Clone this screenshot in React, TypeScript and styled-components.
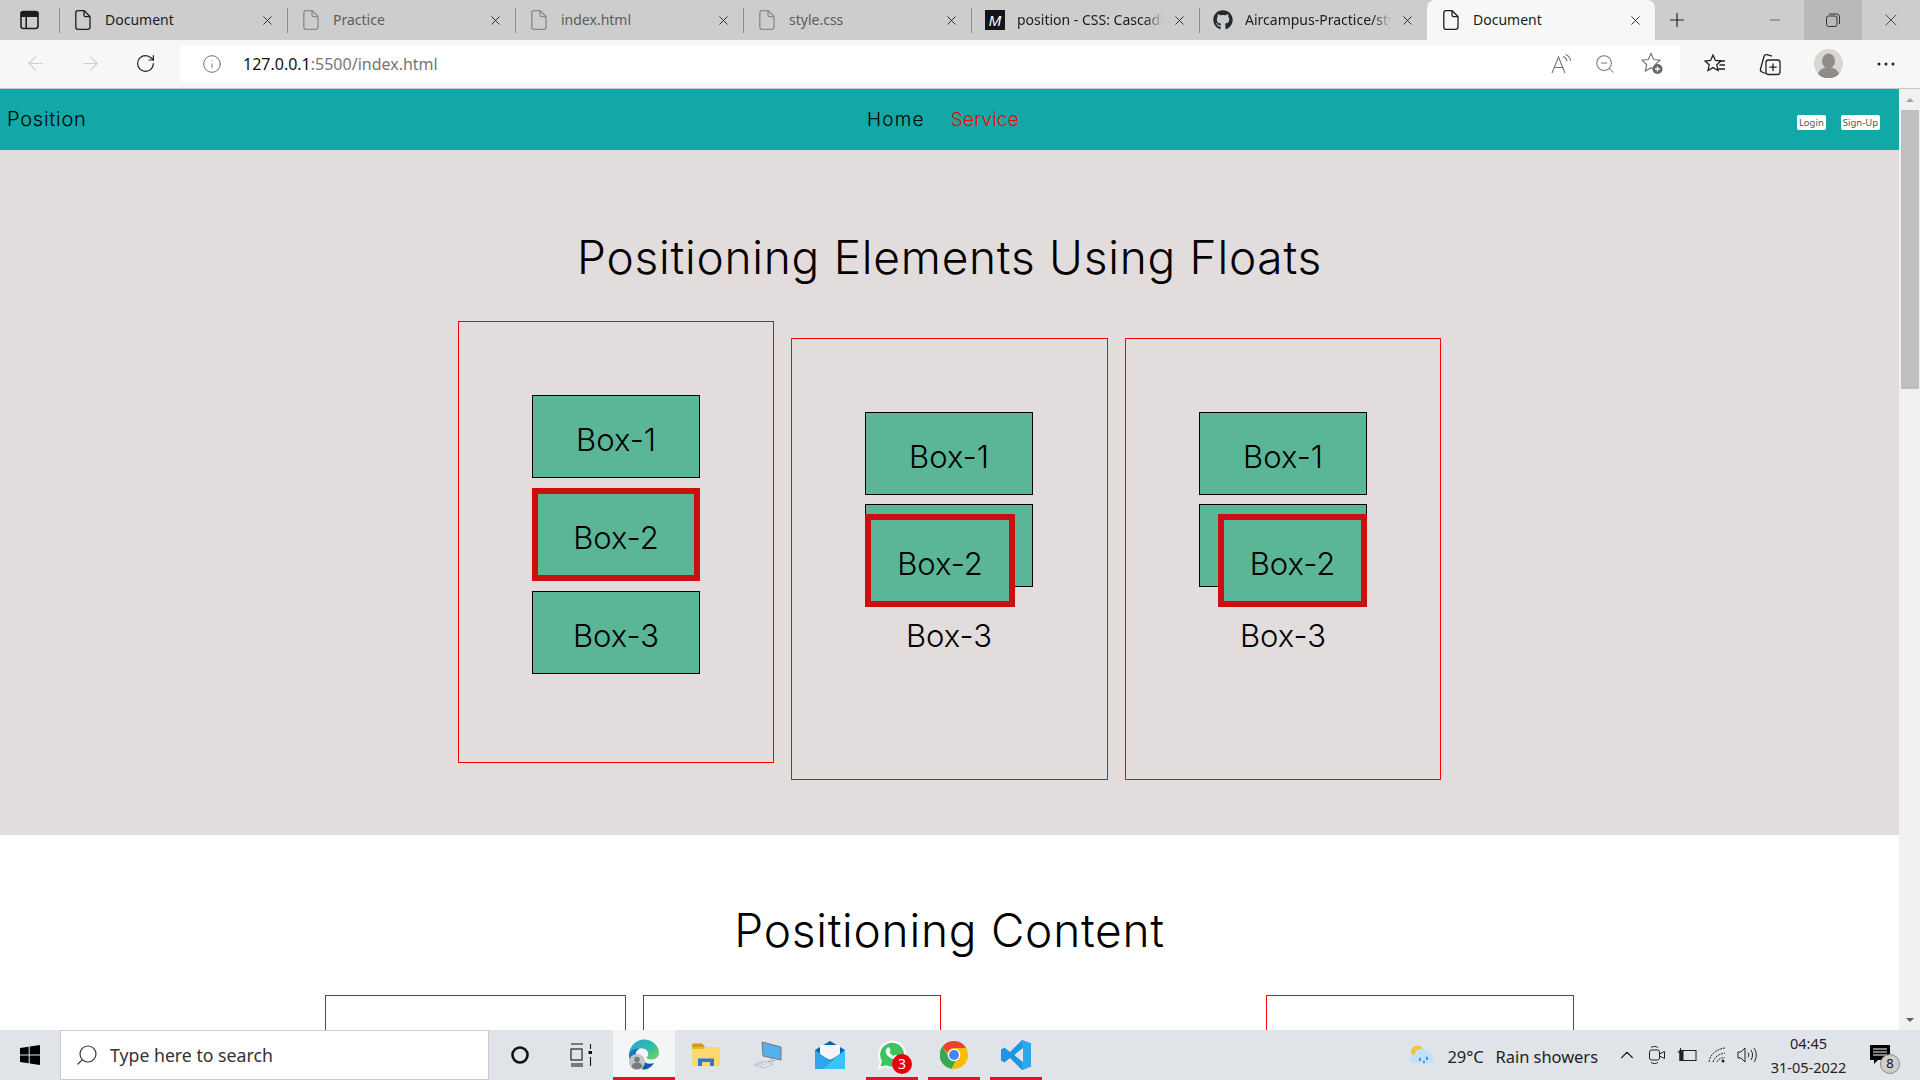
import React from 'react';
import styled, { createGlobalStyle } from 'styled-components';
import { ArrowLeft, ArrowRight, RotateCw, Info, X, Plus, Minus, ZoomOut, ChevronUp, Search } from 'lucide-react';
import { FaGithub } from 'react-icons/fa';

const GlobalStyle = createGlobalStyle`
  html, body { margin: 0; padding: 0; width: 1920px; height: 1080px; overflow: hidden; }
  * { box-sizing: border-box; }
  body { font-family: "Noto Sans", "Open Sans", sans-serif; color: #000; }
`;

const PAGE_FONT = `"Inter", "Open Sans", sans-serif`;

const Shell = styled.div`
  width: 1920px;
  height: 1080px;
  display: flex;
  flex-direction: column;
  overflow: hidden;
`;

/* ---------- browser chrome ---------- */

const TabStrip = styled.div`
  height: 40px;
  flex: none;
  display: flex;
  background: #cdcdcd;
`;

const SidebarButton = styled.div`
  width: 59px;
  display: flex;
  align-items: center;
  justify-content: center;
`;

const Tab = styled.div<{ $active?: boolean; $noSep?: boolean }>`
  width: 228px;
  height: 40px;
  display: flex;
  align-items: center;
  padding: 0 12px 0 16px;
  position: relative;
  background: ${(p) => (p.$active ? '#f7f7f7' : 'transparent')};
  border-radius: ${(p) => (p.$active ? '8px 8px 0 0' : '0')};
  &::before {
    content: '';
    display: ${(p) => (p.$noSep ? 'none' : 'block')};
    position: absolute;
    left: 0;
    top: 8px;
    height: 25px;
    width: 1px;
    background: #8e8e8e;
  }
`;

const TabFavicon = styled.span`
  width: 20px;
  height: 20px;
  flex: none;
  display: flex;
  align-items: center;
  justify-content: center;
  margin-right: 12px;
  margin-left: -2px;
`;

const TabTitle = styled.span<{ $dim?: boolean; $fade?: boolean }>`
  flex: 1;
  min-width: 0;
  white-space: nowrap;
  overflow: hidden;
  font-size: 14px;
  padding-bottom: 2px;
  color: ${(p) => (p.$dim ? '#5c5c5c' : '#1c1c1c')};
  ${(p) =>
    p.$fade &&
    `-webkit-mask-image: linear-gradient(to right, #000 86%, transparent 98%);
     mask-image: linear-gradient(to right, #000 86%, transparent 98%);`}
`;

const TabClose = styled.span`
  flex: none;
  width: 16px;
  display: flex;
  justify-content: center;
  margin-left: 5px;
  color: #1a1a1a;
`;

const MdnMark = styled.span`
  width: 20px;
  height: 20px;
  background: #15141a;
  color: #fff;
  font: italic 400 15px "Liberation Sans", sans-serif;
  display: flex;
  align-items: center;
  justify-content: center;
`;

const NewTab = styled.div`
  width: 44px;
  display: flex;
  align-items: center;
  justify-content: center;
  color: #222;
`;

const WindowControls = styled.div`
  margin-left: auto;
  display: flex;
`;

const WindowButton = styled.div<{ $hover?: boolean }>`
  width: 58px;
  height: 40px;
  display: flex;
  align-items: center;
  justify-content: center;
  color: #333;
  background: ${(p) => (p.$hover ? '#b9b9b9' : 'transparent')};
`;

const Toolbar = styled.div`
  height: 49px;
  flex: none;
  display: flex;
  align-items: center;
  background: #f7f7f7;
  border-bottom: 1px solid #c9c9c9;
  padding-bottom: 1px;
`;

const NavIcons = styled.div`
  width: 180px;
  display: flex;
  align-items: center;
  padding-left: 8px;
`;

const NavIcon = styled.span<{ $off?: boolean }>`
  width: 55px;
  display: flex;
  justify-content: center;
  color: ${(p) => (p.$off ? '#d0d0d0' : '#222')};
`;

const AddressBar = styled.div`
  width: 1500px;
  height: 38px;
  background: #fff;
  border-radius: 5px;
  display: flex;
  align-items: center;
  padding: 0 16px 0 22px;
`;

const Url = styled.span`
  margin-left: 21px;
  font-size: 16px;
  color: #767676;
  b {
    font-weight: 400;
    color: #111;
  }
`;

const AddressActions = styled.div`
  margin-left: auto;
  display: flex;
  align-items: center;
  gap: 21px;
  color: #777;
  svg:last-child { margin-left: 4px; }
`;

const ToolbarActions = styled.div`
  display: flex;
  align-items: center;
  margin-left: 6px;
`;

const ToolbarSlot = styled.span`
  width: 57px;
  display: flex;
  justify-content: center;
  color: #222;
`;

/* ---------- page ---------- */

const Viewport = styled.div`
  flex: 1;
  min-height: 0;
  display: flex;
`;

const Page = styled.div`
  flex: 1;
  min-width: 0;
  overflow: hidden;
  background: #fff;
  font-family: ${PAGE_FONT};
`;

const Header = styled.header`
  height: 61px;
  background: #12a8a8;
  display: grid;
  grid-template-columns: 1fr auto 1fr;
  align-items: center;
  padding: 0 19px 0 7px;
`;

const Brand = styled.div`
  font-size: 20px;
  font-weight: 300;
  letter-spacing: 0.75px;
  margin-bottom: 2px;
`;

const Links = styled.nav`
  display: flex;
  gap: 26px;
  margin-right: 1px;
`;

const NavLink = styled.a<{ $current?: boolean }>`
  font-size: 19px;
  font-weight: 300;
  letter-spacing: ${(p) => (p.$current ? '0.2px' : '1.2px')};
  color: ${(p) => (p.$current ? '#ff0000' : '#000')};
`;

const Auth = styled.div`
  display: flex;
  justify-content: flex-end;
  gap: 15px;
  padding-top: 6px;
`;

const AuthButton = styled.button`
  height: 15px;
  padding: 0 2px;
  background: #fff;
  color: #555;
  border: 0;
  border-radius: 2px;
  font: 400 9.5px "Noto Sans", sans-serif;
`;

const FloatSection = styled.section`
  height: 685px;
  background: #e2dcdc;
  padding-top: 79px;
`;

const Heading = styled.h1`
  margin: 0;
  text-align: center;
  font-size: 46px;
  line-height: 56px;
  font-weight: 300;
  letter-spacing: 0.75px;
  color: #000;
`;

const CardRow = styled.div`
  display: flex;
  justify-content: center;
  align-items: flex-start;
  gap: 17px;
  margin-top: 36px;
`;

const Card = styled.div<{ $drop?: boolean; $wide?: boolean }>`
  width: ${(p) => (p.$wide ? '317px' : '316px')};
  height: 442px;
  margin-top: ${(p) => (p.$drop ? '17px' : '0')};
  border: 1px solid #ff0000;
  padding: 73px 73px 0;
`;

const Box = styled.div<{ $loose?: boolean }>`
  width: 168px;
  height: 83px;
  margin-bottom: ${(p) => (p.$loose ? '10px' : '9px')};
  padding-top: 29px;
  background: #5bb698;
  border: 1px solid #000;
  text-align: center;
  font-size: 31px;
  line-height: 30px;
  font-weight: 300;
`;

const HighlightBox = styled(Box)<{ $float?: 'left' | 'right' }>`
  height: 93px;
  width: ${(p) => (p.$float === 'left' ? '150px' : p.$float === 'right' ? '149px' : '168px')};
  border: 6px solid #cc0e0e;
  margin-bottom: 10px;
  ${(p) =>
    p.$float &&
    `float: ${p.$float};
     margin-top: -20px;
     margin-bottom: 14px;
     margin-${p.$float}: -1px;`}
`;

const ContentSection = styled.section`
  height: 195px;
  padding-top: 67px;
`;

const SmallCardRow = styled.div`
  display: flex;
  margin: 37px 0 0 325px;
`;

const SmallCard = styled.div<{ $w: number; $mr: number }>`
  width: ${(p) => p.$w}px;
  margin-right: ${(p) => p.$mr}px;
  height: 300px;
  border: 1px solid #ff0000;
`;

const Scrollbar = styled.div`
  width: 21px;
  flex: none;
  background: #f1f1f1;
  display: flex;
  flex-direction: column;
  align-items: center;
`;

const ScrollArrow = styled.div<{ $down?: boolean }>`
  height: 21px;
  width: 100%;
  flex: none;
  display: flex;
  align-items: center;
  justify-content: center;
  margin-top: ${(p) => (p.$down ? 'auto' : '0')};
  &::after {
    content: '';
    border-left: 4px solid transparent;
    border-right: 4px solid transparent;
    ${(p) => (p.$down ? 'border-top: 4px solid #5f5f5f;' : 'border-bottom: 4px solid #a3a3a3;')}
  }
`;

const ScrollThumb = styled.div`
  width: 18px;
  height: 279px;
  background: #bfbfbf;
`;

/* ---------- taskbar ---------- */

const Taskbar = styled.div`
  height: 50px;
  flex: none;
  display: flex;
  align-items: stretch;
  background: #e0e4e8;
`;

const StartSlot = styled.div`
  width: 60px;
  display: flex;
  align-items: center;
  justify-content: center;
`;

const SearchBox = styled.div`
  width: 429px;
  background: #fff;
  border: 1px solid #ccc;
  display: flex;
  align-items: center;
  padding-left: 14px;
  color: #333;
  font-size: 17.7px;
  span { margin-left: 11px; }
  svg { transform: scaleX(-1); }
`;

const ShellSlot = styled.div`
  width: 61px;
  display: flex;
  align-items: center;
  justify-content: center;
`;

const Apps = styled.div`
  display: flex;
  margin-left: 2px;
`;

const AppSlot = styled.div<{ $active?: boolean; $running?: boolean }>`
  width: 62px;
  display: flex;
  align-items: center;
  justify-content: center;
  position: relative;
  background: ${(p) => (p.$active ? '#f3f5f7' : 'transparent')};
  &::after {
    content: '';
    display: ${(p) => (p.$running ? 'block' : 'none')};
    position: absolute;
    bottom: 0;
    left: ${(p) => (p.$active ? '0' : '5px')};
    right: ${(p) => (p.$active ? '0' : '5px')};
    height: 3px;
    background: #e3122a;
  }
`;

const UnreadBadge = styled.span`
  position: absolute;
  left: 31px;
  top: 24px;
  width: 20px;
  height: 20px;
  border-radius: 50%;
  background: #e8000d;
  color: #fff;
  font-size: 14px;
  line-height: 20px;
  text-align: center;
`;

const Tray = styled.div`
  margin-left: auto;
  display: flex;
  align-items: center;
  color: #222;
  padding-right: 15px;
`;

const Weather = styled.div`
  display: flex;
  align-items: center;
  font-size: 16.5px;
  letter-spacing: -0.05px;
  margin-right: 14px;
  padding-top: 2px;
  svg { margin-right: 12px; margin-top: -2px; }
  span + span { margin-left: 12px; }
`;

const TraySlot = styled.span`
  width: 30px;
  display: flex;
  justify-content: center;
  color: #222;
`;

const Clock = styled.div`
  width: 93px;
  text-align: center;
  font-size: 14.5px;
  line-height: 24px;
  color: #222;
`;

const NotifySlot = styled.div`
  width: 50px;
  height: 50px;
  position: relative;
  display: flex;
  align-items: center;
  justify-content: center;
`;

const NotifyCount = styled.span`
  position: absolute;
  left: 25px;
  top: 24px;
  width: 20px;
  height: 20px;
  border-radius: 50%;
  border: 1px solid #8a8a8a;
  background: #cfcfcf;
  color: #111;
  font-size: 13px;
  line-height: 17px;
  text-align: center;
`;

/* ---------- icons ---------- */

const DocIcon = ({ color = '#1e1e1e' }: { color?: string }) => (
  <svg width="16" height="20" viewBox="0 0 16 20" fill="none" stroke={color} strokeWidth="1.3">
    <path d="M3 .7h6.2L15 6.5V17a2.3 2.3 0 0 1-2.3 2.3H3A2.3 2.3 0 0 1 .8 17V3A2.3 2.3 0 0 1 3 .7Z" />
    <path d="M9 .8V5a1.6 1.6 0 0 0 1.6 1.6H15" />
  </svg>
);

const SidebarIcon = () => (
  <svg width="19" height="20" viewBox="0 0 19 20" fill="none" stroke="#1e1e1e" strokeWidth="1.6">
    <rect x="1" y="1.5" width="17" height="17" rx="2.5" />
    <path d="M1.5 2.5h16v3.6h-16z" fill="#1e1e1e" />
    <path d="M6.2 6v12" />
  </svg>
);

const RestoreIcon = () => (
  <svg width="14" height="14" viewBox="0 0 14 14" fill="none" stroke="#333" strokeWidth="1">
    <rect x=".5" y="3" width="10.5" height="10.5" rx="2" />
    <path d="M3 1h7.5A3 3 0 0 1 13.5 4v7" />
  </svg>
);

const ReadAloudIcon = () => (
  <svg width="22" height="20" viewBox="0 0 22 20" fill="none" stroke="#777" strokeWidth="1.1">
    <path d="M1 19 7.5 3 14 19M3.4 13.5h8.2" />
    <path d="M12 2.5c2 .7 3.5 2.5 4 4.6M14.5.5c2.6 1 4.7 3.4 5.2 6.5" />
  </svg>
);

const FavAddIcon = () => (
  <svg width="23" height="23" viewBox="0 0 23 23" fill="none" stroke="#777" strokeWidth="1.2">
    <path d="M10 1.5 12.7 7.5l6.3.7-4.7 4.3 1.3 6.3L10 15.8 4.4 19l1.3-6.3L1 8.2l6.3-.7Z" />
    <circle cx="16.5" cy="17" r="5" fill="#666" stroke="none" />
    <path d="M16.5 14.5v5M14 17h5" stroke="#fff" strokeWidth="1.3" />
  </svg>
);

const FavoritesIcon = () => (
  <svg width="22" height="22" viewBox="0 0 22 22" fill="none" stroke="#222" strokeWidth="1.3">
    <path d="M9 2 11.4 7.4l5.6.6-4.2 3.8 1.2 5.7L9 14.6 4 17.5l1.2-5.7L1 8l5.6-.6Z" />
    <path d="M15 8h6M15.5 12h5.5M14 16h7" />
  </svg>
);

const CollectionsIcon = () => (
  <svg width="22" height="24" viewBox="0 0 22 24" fill="none" stroke="#222" strokeWidth="1.3" style={{ marginRight: 3 }}>
    <path d="M6.5 21.5 3 20A2.5 2.5 0 0 1 1.5 17L5 4.5A2.5 2.5 0 0 1 8 2.7l5 1.5" />
    <rect x="7" y="8" width="14" height="14.5" rx="2.5" />
    <path d="M14 11.5V19M10.3 15.2h7.4" />
  </svg>
);

const AvatarIcon = () => (
  <svg width="29" height="29" viewBox="0 0 29 29">
    <circle cx="14.5" cy="14.5" r="14.5" fill="#d9d6d2" />
    <ellipse cx="14.5" cy="12" rx="6.5" ry="7.5" fill="#8f8c88" />
    <path d="M4 25c1.5-5 5.5-6.5 10.5-6.5S23.5 20 25 25a14.5 14.5 0 0 1-21 0Z" fill="#8f8c88" />
  </svg>
);

const DotsIcon = () => (
  <svg width="18" height="4" viewBox="0 0 18 4" fill="#222">
    <circle cx="2" cy="2" r="1.5" />
    <circle cx="9" cy="2" r="1.5" />
    <circle cx="16" cy="2" r="1.5" />
  </svg>
);

const WindowsIcon = () => (
  <svg width="20" height="20" viewBox="0 0 20 20" fill="#000">
    <path d="M0 3 8.7 1.7v7.7H0ZM9.700 1.500 20 0v9.400H9.700ZM0 10.400h8.700v7.900L0 17ZM9.700 10.400H20V20L9.700 18.500Z" />
  </svg>
);

const CortanaIcon = () => (
  <svg width="20" height="20" viewBox="0 0 20 20" fill="none" stroke="#111" strokeWidth="2.6">
    <circle cx="10" cy="10" r="7.5" />
  </svg>
);

const TaskViewIcon = () => (
  <svg width="22" height="24" viewBox="0 0 22 24" fill="none" stroke="#111" strokeWidth="1.1">
    <path d="M1 1h12M1 23h12M1 21h12" />
    <rect x="1" y="6" width="11" height="11" />
    <path d="M20.5 1v5M20.5 14v9" />
    <rect x="18.5" y="8" width="4" height="3" fill="#111" stroke="none" />
  </svg>
);

const EdgeIcon = () => (
  <svg width="32" height="32" viewBox="0 0 32 32">
    <defs>
      <linearGradient id="edgeTop" x1="0" y1="0" x2="1" y2="1">
        <stop offset="0" stopColor="#1fa3d8" />
        <stop offset="0.6" stopColor="#35c1a0" />
        <stop offset="1" stopColor="#7bd648" />
      </linearGradient>
    </defs>
    <path d="M1 15C2 6 9 .5 16 .5c8 0 15 6 15 13.5 0 4-3.5 6.5-7.5 6.5-3 0-5-1-5-2 3-2 2.5-8-3.5-9C9 8.5 3 10 1 15Z" fill="url(#edgeTop)" />
    <path d="M1 15c1.5-4 6-6.5 11-5.500-4 1.500-5.500 6-3 11L3 23C1.500 21 .8 18 1 15Z" fill="#1a75c4" />
    <path d="M14 20c2 4 7 6 12 4-3 5-8 7-12 6.500 1-2 2-5 0-10.500Z" fill="#0c59a4" />
    <circle cx="9" cy="23" r="8" fill="#c3c3c3" />
    <circle cx="9" cy="20.5" r="2.7" fill="#7a7a7a" />
    <path d="M3.500 28c.7-3.500 3-4.500 5.500-4.500s4.800 1 5.500 4.500a8 8 0 0 1-11 0Z" fill="#7a7a7a" />
  </svg>
);

const ExplorerIcon = () => (
  <svg width="28" height="24" viewBox="0 0 28 24">
    <path d="M0 2a1.500 1.500 0 0 1 1.500-1.500H10L13 4H0Z" fill="#d39b12" />
    <path d="M0 4h28v17.500A1.500 1.500 0 0 1 26.500 23h-25A1.500 1.500 0 0 1 0 21.500Z" fill="#fbd972" />
    <path d="M6 15.500h16V23h-4v-4h-8v4H6Z" fill="#2f79c6" />
    <path d="M0 4h13l-2 2H0Z" fill="#e9b43a" />
  </svg>
);

const PcIcon = () => (
  <svg width="30" height="28" viewBox="0 0 30 28">
    <path d="M9 1 28 6v13L10 15Z" fill="#56b0ee" stroke="#777" strokeWidth="1" />
    <path d="M18 17.500v2M15 20.500l7-1" stroke="#9aa" strokeWidth="1" />
    <path d="M1 24 10 20l10 3-9 4Z" fill="#e9eaec" stroke="#aab" strokeWidth=".7" />
    <path d="M4 24l7-2.500M7 25l7-2.500" stroke="#aab" strokeWidth=".7" />
  </svg>
);

const MailIcon = () => (
  <svg width="30" height="28" viewBox="0 0 30 28">
    <path d="M0 9 15 0l15 9v19H0Z" fill="#0f63ae" />
    <path d="M5 4h20v10l-10 5-10-5Z" fill="#f4f6f8" />
    <path d="M0 9l15 11L30 9v19H0Z" fill="#2fa6e8" />
    <path d="M30 9v19H8Z" fill="#38c4f4" />
  </svg>
);

const WhatsAppIcon = () => (
  <svg width="30" height="30" viewBox="0 0 30 30">
    <path d="M1 29l2-7.500a14 14 0 1 1 5.500 5.500Z" fill="#fff" />
    <path d="M3.500 26.500l1.500-5.300a12 12 0 1 1 4.200 4Z" fill="#3dc461" />
    <path d="M10 8c1-1 2-1 2.500 0l1 2.500-1 1.500c.8 1.800 2.300 3.200 4 4l1.500-1.200 2.500 1.200c.8.500.5 1.800-.3 2.500-1.500 1.300-3.500 1-6-.3-3-1.500-5.500-4.500-5.500-7 0-1.200.5-2 1.300-2.700Z" fill="#fff" />
  </svg>
);

const ChromeIcon = () => (
  <svg width="28" height="28" viewBox="0 0 28 28">
    <circle cx="14" cy="14" r="14" fill="#fbbc04" />
    <path d="M14 0a14 14 0 0 1 12.100 7H14a7 7 0 0 0-6.700 5L2.500 5.500A14 14 0 0 1 14 0Z" fill="#ea4335" />
    <path d="M2.500 5.500 8 15c1 3 3.500 5.300 7.500 5L11.500 27.800A14 14 0 0 1 2.500 5.500Z" fill="#34a853" />
    <circle cx="14" cy="14" r="6.2" fill="#fff" />
    <circle cx="14" cy="14" r="5" fill="#4285f4" />
  </svg>
);

const VsCodeIcon = () => (
  <svg width="30" height="30" viewBox="0 0 30 30">
    <path d="M21 0 9 12 3.500 7.500 0 9.500v11L3.500 22.500 9 18l12 12 9-3.500v-23Zm1 8v14l-8.500-7Z" fill="#1e97e0" />
    <path d="M21 0l9 3.500v23L21 30Z" fill="#2aa9ee" />
    <path d="M22 8v14l-8.500-7Z" fill="#e0e4e8" />
  </svg>
);

const CloudIcon = () => (
  <svg width="26" height="21" viewBox="0 0 26 21">
    <circle cx="8.500" cy="7" r="6.500" fill="#f5c23e" />
    <path d="M6 18a4.500 4.500 0 0 1-.5-9 6.500 6.500 0 0 1 12.500-1 5 5 0 0 1 2.500 10Z" fill="#bfe0f8" />
    <path d="M11 12c1.500 2 1.500 4 0 4s-1.500-2 0-4ZM18 11c1.500 2 1.500 4 0 4s-1.500-2 0-4ZM15 15c1.200 1.600 1.200 3.500 0 3.500s-1.200-1.900 0-3.500Z" fill="#2f8fdc" />
  </svg>
);

const MeetIcon = () => (
  <svg width="16" height="20" viewBox="0 0 16 20" fill="none" stroke="#222" strokeWidth="1">
    <rect x=".5" y="5" width="10" height="10" rx="2" />
    <path d="M10.500 9l5-2.500v7l-5-2.500M2 2.500c2-1.400 5-1.400 7 0M2 17.500c2 1.400 5 1.400 7 0" />
  </svg>
);

const BatteryIcon = () => (
  <svg width="20" height="14" viewBox="0 0 20 14" fill="none" stroke="#222" strokeWidth="1">
    <rect x="3" y="2.500" width="16" height="10" />
    <rect x="3" y="2.500" width="3" height="10" fill="#222" />
    <path d="M3.500 0v3M.5 4h5v2L3.500 8v5" />
  </svg>
);

const WifiIcon = () => (
  <svg width="18" height="16" viewBox="0 0 18 16" fill="none" stroke="#222" strokeWidth="1">
    <path d="M1 15C2 8 8 2 17 1M5 15c1-4 5-8 12-9M9 15c.7-2 3-4 8-4.500" strokeDasharray="2 1" />
    <circle cx="15" cy="14" r="1.500" fill="#222" stroke="none" />
  </svg>
);

const VolumeIcon = () => (
  <svg width="20" height="18" viewBox="0 0 20 18" fill="none" stroke="#222" strokeWidth="1">
    <path d="M1 6h3l4-4v14l-4-4H1ZM11 6.500c1 1.500 1 3.500 0 5M14 4c2 3 2 7 0 10M17 2c3 4 3 10 0 14" />
  </svg>
);

const NotifyIcon = () => (
  <svg width="20" height="20" viewBox="0 0 20 20" fill="#000">
    <path d="M0 0h20v15H8l-4 4v-4H0Z" />
    <path d="M3 4h14M3 7h14M3 10h14" stroke="#fff" strokeWidth="1" />
  </svg>
);

const tabs = [
  { title: 'Document', color: '#1e1e1e' },
  { title: 'Practice', color: '#8a8a8a', dim: true },
  { title: 'index.html', color: '#8a8a8a', dim: true },
  { title: 'style.css', color: '#8a8a8a', dim: true },
];

function App() {
  return (
    <Shell>
      <GlobalStyle />
      <TabStrip>
        <SidebarButton>
          <SidebarIcon />
        </SidebarButton>
        {tabs.map((t) => (
          <Tab key={t.title}>
            <TabFavicon>
              <DocIcon color={t.color} />
            </TabFavicon>
            <TabTitle $dim={t.dim}>{t.title}</TabTitle>
            <TabClose>
              <X size={15} strokeWidth={1.4} />
            </TabClose>
          </Tab>
        ))}
        <Tab>
          <TabFavicon>
            <MdnMark>M</MdnMark>
          </TabFavicon>
          <TabTitle $fade>position - CSS: Cascading Style</TabTitle>
          <TabClose>
            <X size={15} strokeWidth={1.4} />
          </TabClose>
        </Tab>
        <Tab>
          <TabFavicon>
            <FaGithub size={20} color="#24292f" />
          </TabFavicon>
          <TabTitle $fade>Aircampus-Practice/style.css</TabTitle>
          <TabClose>
            <X size={15} strokeWidth={1.4} />
          </TabClose>
        </Tab>
        <Tab $active $noSep>
          <TabFavicon>
            <DocIcon />
          </TabFavicon>
          <TabTitle>Document</TabTitle>
          <TabClose>
            <X size={15} strokeWidth={1.4} />
          </TabClose>
        </Tab>
        <NewTab>
          <Plus size={22} strokeWidth={1.3} />
        </NewTab>
        <WindowControls>
          <WindowButton>
            <Minus size={16} strokeWidth={1} />
          </WindowButton>
          <WindowButton $hover>
            <RestoreIcon />
          </WindowButton>
          <WindowButton>
            <X size={20} strokeWidth={1} />
          </WindowButton>
        </WindowControls>
      </TabStrip>

      <Toolbar>
        <NavIcons>
          <NavIcon $off>
            <ArrowLeft size={23} strokeWidth={1.2} />
          </NavIcon>
          <NavIcon $off>
            <ArrowRight size={23} strokeWidth={1.2} />
          </NavIcon>
          <NavIcon>
            <RotateCw size={21} strokeWidth={1.4} />
          </NavIcon>
        </NavIcons>
        <AddressBar>
          <Info size={20} strokeWidth={1.1} color="#666" />
          <Url>
            <b>127.0.0.1</b>:5500/index.html
          </Url>
          <AddressActions>
            <ReadAloudIcon />
            <ZoomOut size={22} strokeWidth={1.1} />
            <FavAddIcon />
          </AddressActions>
        </AddressBar>
        <ToolbarActions>
          <ToolbarSlot>
            <FavoritesIcon />
          </ToolbarSlot>
          <ToolbarSlot>
            <CollectionsIcon />
          </ToolbarSlot>
          <ToolbarSlot>
            <AvatarIcon />
          </ToolbarSlot>
          <ToolbarSlot>
            <DotsIcon />
          </ToolbarSlot>
        </ToolbarActions>
      </Toolbar>

      <Viewport>
        <Page>
          <Header>
            <Brand>Position</Brand>
            <Links>
              <NavLink>Home</NavLink>
              <NavLink $current>Service</NavLink>
            </Links>
            <Auth>
              <AuthButton>Login</AuthButton>
              <AuthButton>Sign-Up</AuthButton>
            </Auth>
          </Header>

          <FloatSection>
            <Heading>Positioning Elements Using Floats</Heading>
            <CardRow>
              <Card>
                <Box $loose>Box-1</Box>
                <HighlightBox>Box-2</HighlightBox>
                <Box>Box-3</Box>
              </Card>
              <Card $drop $wide>
                <Box>Box-1</Box>
                <Box>
                  <HighlightBox $float="left">Box-2</HighlightBox>
                  Box-3
                </Box>
              </Card>
              <Card $drop>
                <Box>Box-1</Box>
                <Box>
                  <HighlightBox $float="right">Box-2</HighlightBox>
                  Box-3
                </Box>
              </Card>
            </CardRow>
          </FloatSection>

          <ContentSection>
            <Heading>Positioning Content</Heading>
            <SmallCardRow>
              <SmallCard $w={301} $mr={17} />
              <SmallCard $w={298} $mr={325} />
              <SmallCard $w={308} $mr={0} />
            </SmallCardRow>
          </ContentSection>
        </Page>
        <Scrollbar>
          <ScrollArrow />
          <ScrollThumb />
          <ScrollArrow $down />
        </Scrollbar>
      </Viewport>

      <Taskbar>
        <StartSlot>
          <WindowsIcon />
        </StartSlot>
        <SearchBox>
          <Search size={24} strokeWidth={1.2} />
          <span>Type here to search</span>
        </SearchBox>
        <ShellSlot>
          <CortanaIcon />
        </ShellSlot>
        <ShellSlot>
          <TaskViewIcon />
        </ShellSlot>
        <Apps>
          <AppSlot $active $running>
            <EdgeIcon />
          </AppSlot>
          <AppSlot>
            <ExplorerIcon />
          </AppSlot>
          <AppSlot>
            <PcIcon />
          </AppSlot>
          <AppSlot>
            <MailIcon />
          </AppSlot>
          <AppSlot $running>
            <WhatsAppIcon />
            <UnreadBadge>3</UnreadBadge>
          </AppSlot>
          <AppSlot $running>
            <ChromeIcon />
          </AppSlot>
          <AppSlot $running>
            <VsCodeIcon />
          </AppSlot>
        </Apps>
        <Tray>
          <Weather>
            <CloudIcon />
            <span>29°C</span>
            <span>Rain showers</span>
          </Weather>
          <TraySlot>
            <ChevronUp size={22} strokeWidth={1.2} />
          </TraySlot>
          <TraySlot>
            <MeetIcon />
          </TraySlot>
          <TraySlot>
            <BatteryIcon />
          </TraySlot>
          <TraySlot>
            <WifiIcon />
          </TraySlot>
          <TraySlot>
            <VolumeIcon />
          </TraySlot>
          <Clock>
            04:45
            <br />
            31-05-2022
          </Clock>
          <NotifySlot>
            <NotifyIcon />
            <NotifyCount>8</NotifyCount>
          </NotifySlot>
        </Tray>
      </Taskbar>
    </Shell>
  );
}

export default App;
